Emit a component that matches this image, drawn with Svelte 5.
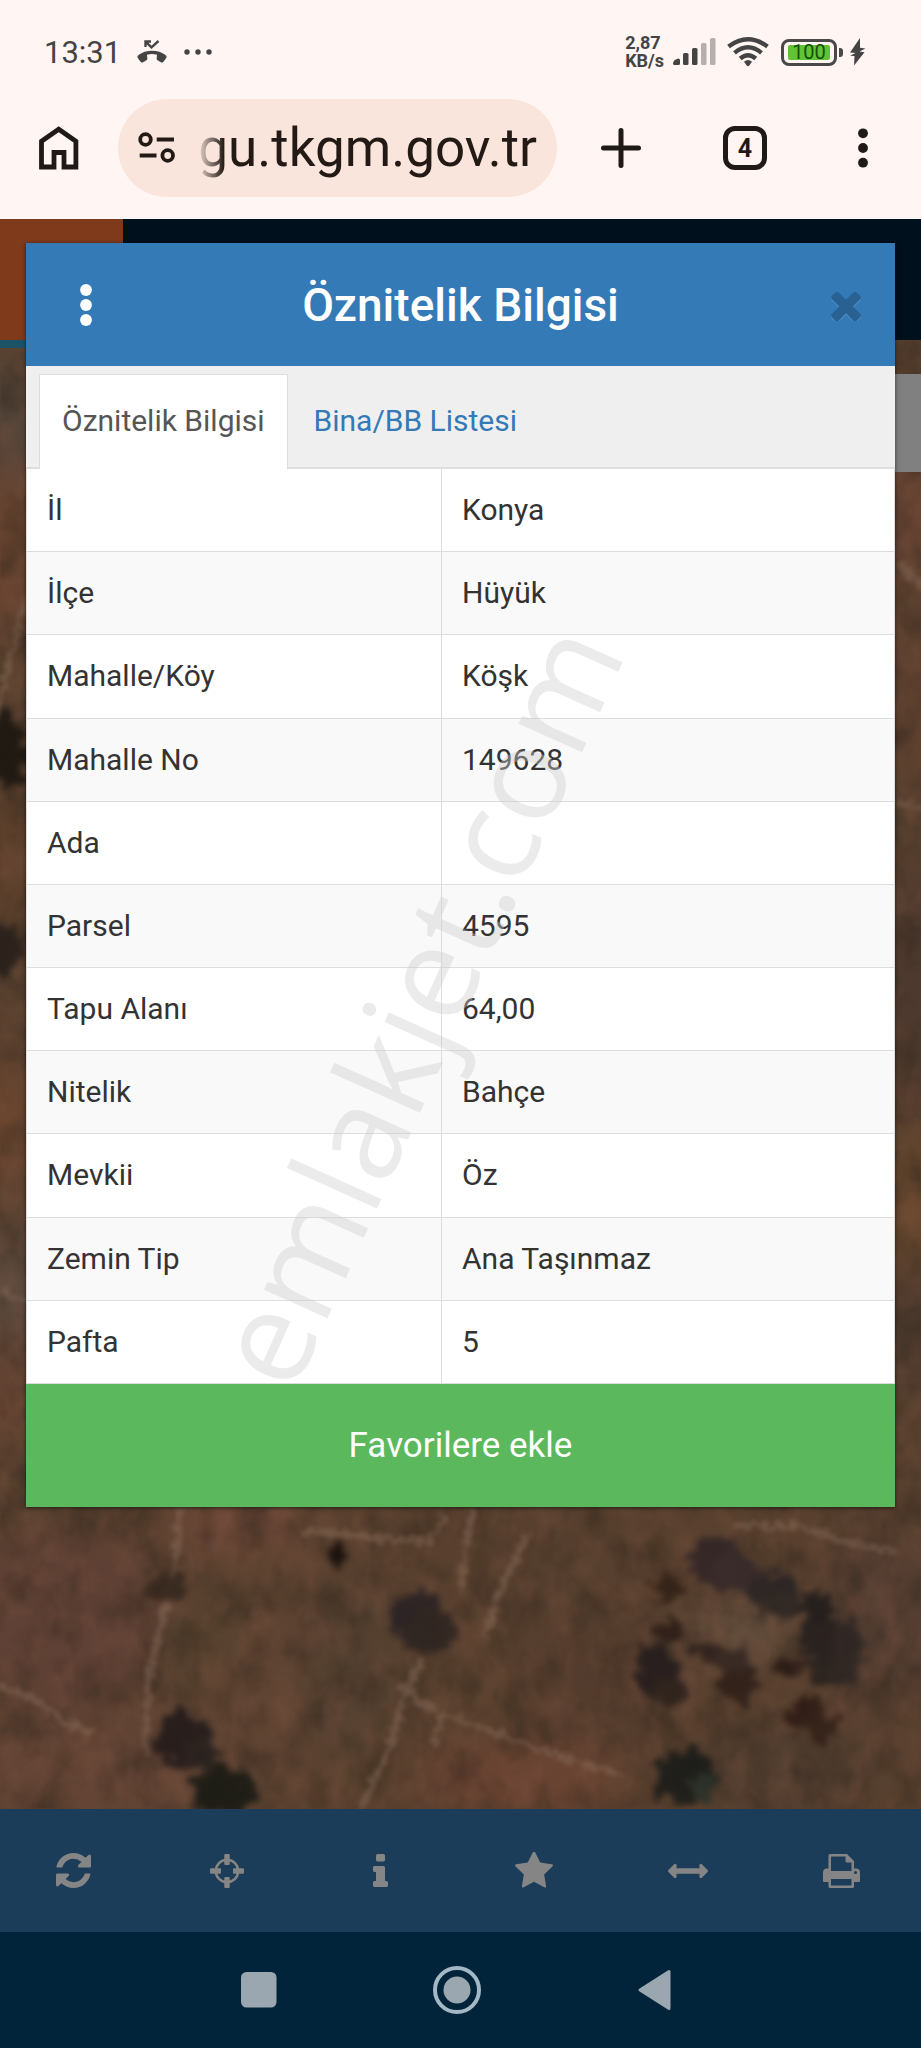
<script lang="ts">
  const rows = [
    { label: "İl", value: "Konya" },
    { label: "İlçe", value: "Hüyük" },
    { label: "Mahalle/Köy", value: "Köşk" },
    { label: "Mahalle No", value: "149628" },
    { label: "Ada", value: "" },
    { label: "Parsel", value: "4595" },
    { label: "Tapu Alanı", value: "64,00" },
    { label: "Nitelik", value: "Bahçe" },
    { label: "Mevkii", value: "Öz" },
    { label: "Zemin Tip", value: "Ana Taşınmaz" },
    { label: "Pafta", value: "5" },
  ];

  const tabs = ["Öznitelik Bilgisi", "Bina/BB Listesi"];
  let activeTab = $state(0);
  let url = $state("gu.tkgm.gov.tr");

  const timesPath = "M1298 1322q0 40-28 68l-136 136q-28 28-68 28t-68-28l-294-294-294 294q-28 28-68 28t-68-28l-136-136q-28-28-28-68t28-68l294-294-294-294q-28-28-28-68t28-68l136-136q28-28 68-28t68 28l294 294 294-294q28-28 68-28t68 28l136 136q28 28 28 68t-28 68l-294 294 294 294q28 28 28 68z";

  const tools = [
    {
      name: "Yenile", w: 35, h: 35, box: "0 128 1536 1536",
      d: "M1511 1056q0 5-1 7-64 268-268 434.5t-478 166.5q-146 0-282.5-55t-243.5-157l-129 129q-19 19-45 19t-45-19-19-45v-448q0-26 19-45t45-19h448q26 0 45 19t19 45-19 45l-137 137q71 66 161 102t187 36q134 0 250-65t186-179q11-17 53-117 8-23 30-23h192q13 0 22.5 9.5t9.5 22.5zm25-800v448q0 26-19 45t-45 19h-448q-26 0-45-19t-19-45 19-45l138-138q-148-137-349-137-134 0-250 65t-186 179q-11 17-53 117-8 23-30 23h-199q-13 0-22.5-9.5t-9.5-22.5v-7q65-268 270-434.5t480-166.5q146 0 284 55.5t245 156.5l130-129q19-19 45-19t45 19 19 45z",
    },
    {
      name: "Konum", w: 34, h: 34, box: "0 0 34 34",
      d: "M17 4.5a12.5 12.5 0 0 1 0 25a12.5 12.5 0 0 1 0-25zM17 7a10 10 0 0 0 0 20a10 10 0 0 0 0-20zM14.3 1q0-1 1-1h3.4q1 0 1 1v9q0 1-1 1h-3.4q-1 0-1-1zM14.3 24q0-1 1-1h3.4q1 0 1 1v9q0 1-1 1h-3.4q-1 0-1-1zM0 15.3q0-1 1-1h9q1 0 1 1v3.4q0 1-1 1h-9q-1 0-1-1zM23 15.3q0-1 1-1h9q1 0 1 1v3.4q0 1-1 1h-9q-1 0-1-1z",
    },
    {
      name: "Bilgi", w: 15, h: 33, box: "0 128 640 1408",
      d: "M640 1344v128q0 26-19 45t-45 19h-512q-26 0-45-19t-19-45v-128q0-26 19-45t45-19h64v-384h-64q-26 0-45-19t-19-45v-128q0-26 19-45t45-19h384q26 0 45 19t19 45v576h64q26 0 45 19t19 45zm-128-1152v192q0 26-19 45t-45 19h-256q-26 0-45-19t-19-45v-192q0-26 19-45t45-19h256q26 0 45 19t19 45z",
    },
    {
      name: "Favoriler", w: 38, h: 38, box: "0 64 1664 1664",
      d: "M1664 647q0 22-26 48l-363 354 86 500q1 7 1 20 0 21-10.5 35.5t-30.5 14.5q-19 0-40-12l-449-236-449 236q-22 12-40 12-21 0-31.5-14.5t-10.5-35.5q0-6 2-20l86-500-364-354q-25-27-25-48 0-37 56-46l502-73 225-455q19-41 49-41t49 41l225 455 502 73q56 9 56 46z",
    },
    {
      name: "Ölçüm", w: 40, h: 40, box: "0 0 1792 1792",
      d: "M1792 896q0 26-19 45l-256 256q-19 19-45 19t-45-19-19-45v-128h-1024v128q0 26-19 45t-45 19-45-19l-256-256q-19-19-19-45t19-45l256-256q19-19 45-19t45 19 19 45v128h1024v-128q0-26 19-45t45-19 45 19l256 256q19 19 19 45z",
    },
    {
      name: "Yazdır", w: 37, h: 34, box: "0 0 37 34",
      d: "M5.5 1.5Q5.5 0 7 0H24L31 7V14.5H33Q37 14.5 37 18.5V27Q37 28 36 28H31V32.5Q31 34 29.5 34H7Q5.5 34 5.5 32.5V28H1Q0 28 0 27V18.5Q0 14.5 4 14.5H5.5ZM8 2.5V17H28.5V8.5H24Q22.5 8.5 22.5 7V2.5ZM8 25V31.5H28.5V25ZM32.5 17a1.5 1.5 0 1 0 0 3a1.5 1.5 0 1 0 0-3z",
    },
  ];

  // lighter and darker patches of soil: x, y, rx, ry, colour
  const soil: [number, number, number, number, string][] = [
    [10, 520, 40, 120, "#6a4531"], [5, 420, 40, 60, "#54453a"], [10, 860, 40, 90, "#5c402c"],
    [8, 1120, 30, 60, "#6e4730"], [12, 1290, 40, 60, "#5d4b3f"], [10, 1400, 30, 50, "#6b4635"],
    [910, 520, 30, 60, "#6a4433"], [912, 700, 25, 90, "#60402f"], [910, 980, 30, 120, "#4b382e"],
    [910, 1200, 24, 70, "#6a492c"], [908, 1330, 24, 60, "#47372d"],
    [60, 1620, 120, 90, "#5f4135"], [270, 1690, 90, 90, "#604433"], [90, 1770, 130, 50, "#644536"],
    [235, 1520, 70, 30, "#70493a"], [350, 1670, 50, 90, "#534030"], [560, 1580, 90, 90, "#57402f"],
    [520, 1780, 110, 40, "#6b4433"], [600, 1680, 80, 60, "#533c2d"], [740, 1630, 60, 30, "#66503f"],
    [880, 1620, 60, 90, "#543e32"], [790, 1770, 90, 50, "#4f3d2f"], [200, 1640, 40, 60, "#56422f"],
  ];

  const trees: [number, number, number, number, string][] = [
    [6, 750, 22, 38, "#17140f"], [6, 948, 18, 26, "#241d19"], [918, 430, 16, 14, "#2d231b"],
    [418, 1616, 28, 28, "#262024"], [430, 1632, 26, 24, "#2b2320"], [184, 1740, 30, 28, "#1f1819"],
    [200, 1752, 20, 16, "#231e1c"],
    [224, 1790, 32, 26, "#151812"], [165, 1588, 20, 16, "#33261c"], [336, 1552, 6, 12, "#140c09"],
    [716, 1562, 28, 22, "#2f2426"], [738, 1574, 26, 20, "#33282a"], [772, 1590, 26, 16, "#252224"],
    [780, 1606, 22, 14, "#2a2522"],
    [817, 1610, 18, 18, "#1d1a1a"], [824, 1638, 26, 18, "#221d1c"], [830, 1664, 26, 18, "#241f1d"],
    [847, 1650, 16, 34, "#2c2523"],
    [658, 1672, 24, 26, "#221b1c"], [668, 1692, 18, 14, "#2a201b"],
    [739, 1682, 18, 20, "#2c1d17"], [728, 1660, 22, 12, "#332622"],
    [669, 1588, 18, 12, "#302016"], [670, 1632, 13, 13, "#2b1c17"], [702, 1648, 14, 9, "#2c1e1c"],
    [804, 1714, 18, 18, "#2c1a14"], [820, 1726, 16, 14, "#311f17"], [792, 1667, 16, 9, "#261814"],
    [686, 1778, 32, 28, "#171a18"], [702, 1788, 14, 16, "#26302a"],
  ];

  const trails = [
    "M180 1508L176 1560 165 1612 148 1680 146 1755",
    "M300 1531L350 1534 385 1539 430 1542 446 1512",
    "M474 1508L464 1550 462 1590",
    "M424 1658L406 1692 388 1750 362 1809",
    "M400 1686L430 1708 470 1724 520 1742 575 1762 625 1776",
    "M445 1710L432 1745", "M530 1530L500 1590 485 1640",
    "M735 1525L800 1527 850 1543 895 1551",
    "M0 1685L40 1702 65 1722 92 1732",
    "M25 600L-5 720", "M0 1290L26 1300", "M895 560L925 590", "M895 800L925 810",
  ];
</script>

<div class="screen">
  <header class="chrome">
    <div class="status">
      <span class="clock">13:31</span>
      <svg class="call" width="32" height="24" viewBox="0 0 32 24" aria-hidden="true">
        <path d="M1.500 17.500Q1 16.200 2.500 15Q8 10.700 16 10.700T29.500 15Q31 16.200 30.500 17.500L27.500 21.800Q26.500 23 25 22.300L21.500 20.300Q20.500 19.500 20.700 18.500L21 14.800Q16 13.400 11 14.800L11.300 18.500Q11.500 19.500 10.500 20.300L7 22.300Q5.500 23 4.500 21.800Z" fill="#444" />
        <path d="M9.500 7V1.500H15M9.800 1.800L15.500 7.300 22.500 1" fill="none" stroke="#444" stroke-width="2.400" />
      </svg>
      <svg width="28" height="8" viewBox="0 0 28 8" fill="#444" aria-hidden="true">
        <circle cx="3" cy="4" r="2.700" /><circle cx="14" cy="4" r="2.700" /><circle cx="25" cy="4" r="2.700" />
      </svg>
      <div class="speed"><span>2,87</span><span>KB/s</span></div>
      <svg width="43" height="28" viewBox="0 0 43 28" aria-hidden="true">
        <g fill="#444">
          <path d="M0 25.500Q0 22 5 20.500Q7 20.500 7 22V25.500Q7 27 5.500 27H1.500Q0 27 0 25.500Z" />
          <rect x="10" y="15" width="5.500" height="12" rx="1.500" />
          <rect x="19" y="10" width="5.500" height="17" rx="1.500" />
        </g>
        <g fill="#b5afae">
          <rect x="28" y="5" width="5.500" height="22" rx="1.500" />
          <rect x="37" y="0" width="5.500" height="27" rx="1.500" />
        </g>
      </svg>
      <svg class="wifi" width="42" height="30" viewBox="0 0 42 30" aria-hidden="true">
        <g fill="none" stroke="#444" stroke-width="4.300">
          <path d="M1.500 9.500Q21-5 40.500 9.500" /><path d="M7.500 15.800Q21 4.500 34.500 15.800" /><path d="M13.200 21.500Q21 15 28.800 21.500" />
        </g>
        <path d="M17 24.800Q21 21.300 25 24.800L22.300 28.600Q21 30 19.700 28.600Z" fill="#444" />
      </svg>
      <span class="battery"><span class="charge">100</span></span>
      <svg class="bolt" width="17" height="28" viewBox="0 0 17 28" aria-hidden="true">
        <path d="M11 0L1 14.500 6.500 15 1 17.800 5.500 18 5 27.500 15.500 14.300 10.500 13.500 16.500 10.500 11 9.800Z" fill="#444" />
      </svg>
    </div>

    <div class="browser">
      <button class="plain" aria-label="Ana sayfa">
        <svg width="40" height="44" viewBox="0 0 40 44" aria-hidden="true">
          <path d="M2.500 41V15.200L19.700 3.200 36.900 15.200V41H25V26.500H15V41Z" fill="none" stroke="#1f1a17" stroke-width="4.800" />
        </svg>
      </button>
      <div class="address">
        <svg width="38" height="32" viewBox="0 0 38 32" fill="none" stroke="#231a15" stroke-width="3.800" aria-hidden="true">
          <circle cx="7.500" cy="7.500" r="5.300" /><path d="M18.700 7.500H36M1.700 23.500H18.500" /><circle cx="29.700" cy="23.500" r="5.300" />
        </svg>
        <input type="text" aria-label="Adres" bind:value={url} />
      </div>
      <button class="plain" aria-label="Yeni sekme">
        <svg width="40" height="40" viewBox="0 0 40 40" aria-hidden="true">
          <path d="M20 2.500V37.500M2.500 20H37.500" stroke="#1f1a17" stroke-width="5" stroke-linecap="round" />
        </svg>
      </button>
      <button class="plain" aria-label="Açık sekmeler"><span class="count">4</span></button>
      <button class="plain" aria-label="Menü">
        <svg width="10" height="40" viewBox="0 0 10 40" fill="#1f1a17" aria-hidden="true">
          <circle cx="5" cy="5.300" r="4.900" /><circle cx="5" cy="20" r="4.900" /><circle cx="5" cy="34.700" r="4.900" />
        </svg>
      </button>
    </div>
  </header>

  <main class="page">
    <div class="backdrop" aria-hidden="true">
      <div class="site-bar"><div class="brand"></div></div>
      <div class="map">
        <svg viewBox="0 340 921 1469" preserveAspectRatio="xMidYMax slice" color-interpolation-filters="sRGB">
          <defs>
            <filter id="soft" x="-50%" y="-50%" width="200%" height="200%"><feGaussianBlur stdDeviation="22" /></filter>
            <filter id="rough" x="-10%" y="-10%" width="120%" height="120%">
              <feTurbulence type="fractalNoise" baseFrequency="0.08" numOctaves="4" seed="7" />
              <feDisplacementMap in="SourceGraphic" scale="32" xChannelSelector="R" yChannelSelector="G" />
              <feGaussianBlur stdDeviation="3" />
            </filter>
            <filter id="dusty" x="-10%" y="-10%" width="120%" height="120%">
              <feTurbulence type="fractalNoise" baseFrequency="0.12" numOctaves="3" seed="3" />
              <feDisplacementMap in="SourceGraphic" scale="16" xChannelSelector="R" yChannelSelector="G" />
              <feGaussianBlur stdDeviation="2" />
            </filter>
            <filter id="shade" x="0" y="0" width="100%" height="100%">
              <feTurbulence type="fractalNoise" baseFrequency="0.030 0.024" numOctaves="5" seed="11" />
              <feColorMatrix values="0 0 0 0 0.160  0 0 0 0 0.130  0 0 0 0 0.100  2 0 0 0 -0.800" />
              <feGaussianBlur stdDeviation="1" />
            </filter>
            <filter id="light" x="0" y="0" width="100%" height="100%">
              <feTurbulence type="fractalNoise" baseFrequency="0.040 0.026" numOctaves="4" seed="23" />
              <feColorMatrix values="0 0 0 0 0.520  0 0 0 0 0.340  0 0 0 0 0.270  0 2 0 0 -0.850" />
              <feGaussianBlur stdDeviation="1" />
            </filter>
          </defs>
          <rect y="340" width="921" height="1469" fill="#59412f" />
          <g filter="url(#soft)">
            {#each soil as [x, y, rx, ry, fill]}
              <ellipse cx={x} cy={y} {rx} {ry} {fill} />
            {/each}
          </g>
          <rect y="340" width="921" height="1469" filter="url(#shade)" opacity="0.45" />
          <rect y="340" width="921" height="1469" filter="url(#light)" opacity="0.35" />
          <g filter="url(#dusty)" fill="none" stroke="#8d705e" stroke-width="6" opacity="0.45">
            {#each trails as d}
              <path {d} />
            {/each}
          </g>
          <g filter="url(#rough)" opacity="0.85">
            {#each trees as [x, y, rx, ry, fill]}
              <ellipse cx={x} cy={y} {rx} {ry} {fill} />
            {/each}
          </g>
        </svg>
        <div class="map-control"></div>
      </div>
    </div>

    <section class="modal" role="dialog" aria-labelledby="modal-title">
      <div class="modal-head">
        <button class="plain" aria-label="Seçenekler">
          <svg width="12" height="42" viewBox="0 0 12 42" fill="#fff" aria-hidden="true">
            <circle cx="6" cy="6" r="5.900" /><circle cx="6" cy="21" r="5.900" /><circle cx="6" cy="36" r="5.900" />
          </svg>
        </button>
        <h1 id="modal-title">Öznitelik Bilgisi</h1>
        <button class="plain close" aria-label="Kapat">
          <svg width="30" height="32" viewBox="110 256 1188 1284" aria-hidden="true">
            <path d={timesPath} transform="translate(0 60)" fill="#4a8fc9" />
            <path d={timesPath} fill="#296292" />
          </svg>
        </button>
      </div>

      <div class="tabs" role="tablist">
        {#each tabs as tab, i}
          <button class="tab" class:active={activeTab === i} role="tab" aria-selected={activeTab === i} onclick={() => (activeTab = i)}>{tab}</button>
        {/each}
      </div>

      <table>
        <tbody>
          {#each rows as row}
            <tr><th scope="row">{row.label}</th><td>{row.value}</td></tr>
          {/each}
        </tbody>
      </table>

      <button class="favorite">Favorilere ekle</button>
    </section>
  </main>

  <nav class="toolbar">
    {#each tools as tool}
      <button class="plain" aria-label={tool.name}>
        <svg width={tool.w} height={tool.h} viewBox={tool.box} aria-hidden="true"><path d={tool.d} fill="#858585" /></svg>
      </button>
    {/each}
  </nav>

  <nav class="system">
    <button class="plain" aria-label="Son uygulamalar">
      <svg width="48" height="48" viewBox="0 0 48 48" aria-hidden="true"><rect x="6" y="6" width="35.500" height="35.500" rx="5.500" fill="#9ba7b0" /></svg>
    </button>
    <button class="plain" aria-label="Ana ekran">
      <svg width="48" height="48" viewBox="0 0 48 48" aria-hidden="true">
        <circle cx="24" cy="24" r="22" fill="none" stroke="#a3b7c5" stroke-width="4" /><circle cx="24" cy="24" r="13.500" fill="#9ba7b0" />
      </svg>
    </button>
    <button class="plain" aria-label="Geri">
      <svg width="48" height="48" viewBox="0 0 48 48" aria-hidden="true"><path d="M9 24L38 5.500V42.500Z" fill="#9ba7b0" stroke="#9ba7b0" stroke-width="3" stroke-linejoin="round" /></svg>
    </button>
  </nav>

  <svg class="watermark" viewBox="0 0 921 2048" aria-hidden="true">
    <text x="460" y="1024" text-anchor="middle" transform="rotate(-65.8 460 1024)">emlakjet.com</text>
  </svg>
</div>

<style>
  :global(body) { margin:0; background:#02243a; }
  .screen { position:relative; display:flex; flex-direction:column; min-height:100vh; overflow:hidden; font-family:Roboto, "Liberation Sans", sans-serif; color:#333; }
  button, input { font-family:inherit; border:0; margin:0; padding:0; }
  button { cursor:pointer; }
  svg { display:block; flex-shrink:0; }
  .plain { display:flex; align-items:center; justify-content:center; background:none; }

  .chrome { background:#fff5f2; padding-bottom:22px; }
  .status { display:flex; align-items:center; height:99px; padding:5px 55px 0 44px; box-sizing:border-box; color:#444; }
  .clock { font-size:31px; }
  .call { margin:0 16px 0 15px; }
  .speed { display:flex; flex-direction:column; margin-left:auto; margin-right:9px; font-size:18px; line-height:18px; font-weight:700; }
  .wifi { margin:0 12px 0 11px; }
  .battery { position:relative; display:flex; width:56px; height:27px; box-sizing:border-box; padding:3px 4px; border:3px solid #4a4848; border-radius:8px; }
  .battery::after { content:""; position:absolute; right:-9px; top:6px; width:4px; height:9px; border-radius:0 3px 3px 0; background:#4a4848; }
  .charge { flex:1; display:flex; align-items:center; justify-content:center; border-radius:2px; background:#62c334; color:#15500a; font-size:20px; line-height:15px; }
  .bolt { margin-left:12px; }

  .browser { display:grid; grid-template-columns:118px 1fr 128px 120px 116px; height:98px; }
  .address { display:flex; align-items:center; gap:20px; min-width:0; padding:0 20px; border-radius:49px; background:#fae5dc; }
  .address input { flex:1; min-width:0; height:98px; background:none; outline:none; color:#231a15; font-size:53px; text-align:right; mask-image:linear-gradient(to right, transparent, #000 28px); }
  .count { display:flex; align-items:center; justify-content:center; width:44px; height:44px; box-sizing:border-box; border:5px solid #1f1a17; border-radius:12px; color:#1f1a17; font-size:25px; font-weight:700; }

  .page { position:relative; flex:1; padding:24px 26px; }
  .backdrop { position:absolute; inset:0; display:flex; flex-direction:column; }
  .site-bar { height:121px; background:#00101c; }
  .brand { width:123px; height:121px; background:#7f391b; border-bottom:8px solid #1c5367; position:relative; z-index:1; }
  .map { position:relative; flex:1; overflow:hidden; }
  .map svg { position:absolute; width:100%; height:100%; }
  .map-control { position:absolute; top:34px; right:0; width:52px; height:98px; background:#808080; }

  .modal { position:relative; z-index:2; background:#fff; box-shadow:0 1px 4px rgba(0,0,0,.6); }
  .modal-head { display:grid; grid-template-columns:120px 1fr 120px; height:123px; background:#337ab7; }
  .modal-head h1 { margin:0; align-self:center; text-align:center; color:#fff; font-size:46px; font-weight:500; }
  .close { justify-content:flex-end; padding-right:34px; }

  .tabs { display:flex; height:103px; box-sizing:border-box; padding:8px 13px 0; background:#efefef; border-bottom:2px solid #ddd; }
  .tab { height:95px; padding:0 26px 2px; background:none; color:#337ab7; font-size:30px; }
  .tab.active { padding:0 22px 3px; background:#fff; color:#555; border:1px solid #ddd; border-bottom:0; }

  table { width:100%; height:915px; border-collapse:collapse; table-layout:fixed; font-size:30px; line-height:42px; }
  th, td { padding:20px; border:1px solid #ddd; border-top:0; text-align:left; font-weight:400; }
  th { width:374px; }
  tr:nth-child(even) { background:#f9f9f9; }
  .favorite { display:block; width:100%; height:123px; background:#5cb85c; color:#fff; font-size:35px; }

  .toolbar { position:relative; display:grid; grid-template-columns:repeat(6, 1fr); height:123px; background:#1b3d5a; }
  .toolbar .plain { padding-right:6px; }
  .system { position:relative; display:flex; justify-content:center; gap:150px; height:116px; padding-right:7px; background:#02243a; }
  .watermark { position:absolute; inset:0; z-index:3; width:100%; height:100%; pointer-events:none; }
  .watermark text { font-family:"Open Sans", "Noto Sans", sans-serif; font-size:130px; fill:rgba(205,205,205,.4); }
</style>
